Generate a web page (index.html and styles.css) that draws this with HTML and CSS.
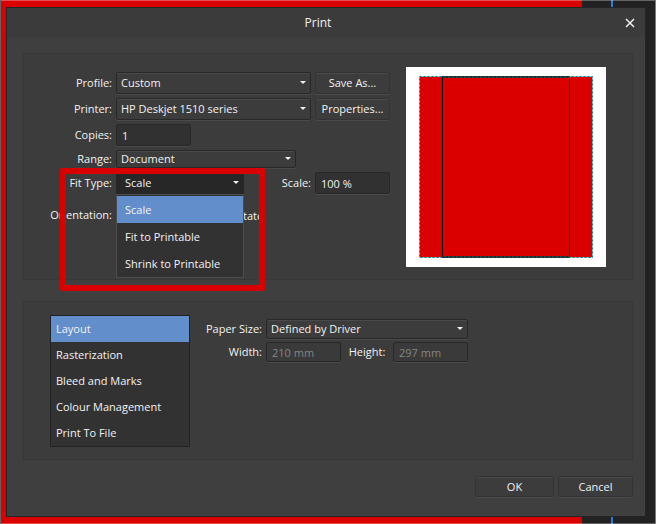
FILE: index.html
```html
<!DOCTYPE html>
<html lang="en">
<head>
    <meta charset="utf-8">
    <meta name="viewport" content="width=device-width, initial-scale=1">
    <title>Print</title>
    <link rel="stylesheet" href="styles.css">
</head>
<body>
    <div class="workspace">
        <form class="dialog">
            <div class="titlebar">
                <h1>Print</h1>
                <button type="button" class="close" aria-label="Close">
                    <svg width="10" height="10" viewBox="0 0 10 10"><path d="M1 1L9 9M9 1L1 9" stroke="#f0f0f0" stroke-width="1.500"/></svg>
                </button>
            </div>
            <div class="content">
                <div class="panel">
                    <div class="settings">
                        <label for="profile">Profile:</label>
                        <div class="select">
                            <select id="profile"><option>Custom</option></select>
                        </div>
                        <button type="button">Save As...</button>

                        <label for="printer">Printer:</label>
                        <div class="select">
                            <select id="printer"><option>HP Deskjet 1510 series</option></select>
                        </div>
                        <button type="button">Properties...</button>

                        <label for="copies">Copies:</label>
                        <input class="field first" type="text" id="copies" value="1">

                        <label for="range">Range:</label>
                        <div class="select range first">
                            <select id="range"><option>Document</option></select>
                        </div>

                        <label for="fit">Fit Type:</label>
                        <div class="fit-row">
                            <div class="select open">
                                <select id="fit"><option>Scale</option></select>
                                <ul class="menu" role="listbox" aria-label="Fit Type">
                                    <li class="selected" role="option" aria-selected="true">Scale</li>
                                    <li role="option">Fit to Printable</li>
                                    <li role="option">Shrink to Printable</li>
                                </ul>
                            </div>
                            <label for="scale">Scale:</label>
                        </div>
                        <input class="field" type="text" id="scale" value="100 %">

                        <span class="orientation">Orientation:</span>
                        <span class="rotate">tate</span>

                        <div class="highlight"></div>
                    </div>
                    <svg class="preview" width="200" height="200" viewBox="0 0 200 200">
                        <rect width="200" height="200" fill="#fff"/>
                        <rect x="13" y="10" width="174" height="180" fill="#db0000"/>
                        <rect x="13.5" y="9.500" width="173" height="181" fill="none" stroke="#8fcccc"/>
                        <rect x="13.5" y="9.500" width="173" height="181" fill="none" stroke="#1d7f80" stroke-dasharray="2 2"/>
                        <rect x="38.500" y="15.500" width="122" height="166" fill="none" stroke="#e80000" stroke-dasharray="3 1"/>
                        <path d="M36.500 9V191M163.500 9V191" stroke="#000"/>
                        <path d="M36 10H164M36 190H164" stroke="#274545" stroke-width="2"/>
                        <path d="M36 10H164M36 190H164" stroke="#101c1c" stroke-dasharray="2 2"/>
                    </svg>
                </div>

                <div class="panel">
                    <ul class="sections">
                        <li class="selected">Layout</li>
                        <li>Rasterization</li>
                        <li>Bleed and Marks</li>
                        <li>Colour Management</li>
                        <li>Print To File</li>
                    </ul>
                    <div class="paper">
                        <label for="paper">Paper Size:</label>
                        <div class="select">
                            <select id="paper"><option>Defined by Driver</option></select>
                        </div>
                        <label for="width">Width:</label>
                        <div class="size-row">
                            <input class="field" type="text" id="width" value="210 mm" disabled>
                            <label for="height">Height:</label>
                            <input class="field" type="text" id="height" value="297 mm" disabled>
                        </div>
                    </div>
                </div>

                <div class="actions">
                    <button type="submit" class="ok">OK</button>
                    <button type="button">Cancel</button>
                </div>
            </div>
        </form>
    </div>
</body>
</html>
```

FILE: styles.css
```css
* {
    box-sizing: border-box;
}
body {
    margin: 0;
    background: #222;
    color: #f2f2f2;
    font-family: "Open Sans", "Noto Sans", sans-serif;
    font-size: 11px;
    line-height: 16px;
}
.workspace {
    min-height: 100vh;
    padding: 6px 9px 6px 5px;
    border: 1px solid rgba(255,255,255,0.3);
    background: linear-gradient(to left, transparent 42px, #2c7be0 42px, #2c7be0 44px, transparent 44px, transparent 73px, #db0000 73px);
}
.dialog {
    border: 1px solid #242424;
    background: #3f3f3f;
}
.titlebar {
    display: flex;
    align-items: center;
    height: 29px;
    padding: 0 8px 0 6px;
    background: #3b3b3b;
}
.titlebar h1 {
    flex: 1;
    margin: 0;
    text-align: center;
    font-size: 12px;
    font-weight: normal;
}
.titlebar .close {
    display: flex;
    align-items: center;
    justify-content: center;
    width: 14px;
    height: 14px;
    padding: 0;
    border: none;
    background: none;
    box-shadow: none;
}
.content {
    padding: 16px 12px 19px 16px;
}
.panel {
    display: flex;
    margin-bottom: 21px;
    padding: 13px 26px 12px 0;
    border: 1px solid #373737;
    background: #3c3c3c;
}

/* form controls */
label {
    text-align: right;
    white-space: nowrap;
}
button, select, .field {
    font: inherit;
    color: inherit;
    border: 1px solid #282828;
    border-radius: 2px;
    box-shadow: 0 1px 0 #4a4a4a;
}
button {
    height: 21px;
    padding: 0;
    border-color: #333;
    background: #3c3c3c;
    box-shadow: 0 1px 0 #4a4a4a, inset 0 1px 0 #4a4a4a;
}
.select {
    position: relative;
}
.select::after {
    content: "";
    position: absolute;
    top: 50%;
    right: 5px;
    margin-top: -2px;
    border: 3px solid transparent;
    border-top-color: #f0f0f0;
    border-bottom: none;
}
select {
    display: block;
    width: 100%;
    height: 22px;
    padding: 0 4px;
    appearance: none;
    background: #3c3c3c;
    box-shadow: 0 1px 0 #4a4a4a, inset 0 1px 0 #4a4a4a;
}
.field {
    width: 75px;
    height: 22px;
    padding: 0 5px;
    background: #313131;
}
.field:disabled {
    color: #858585;
    background: #3a3a3a;
}

/* printer settings */
.settings {
    position: relative;
    flex: 1;
    display: grid;
    grid-template-columns: 88px 1fr 75px;
    align-items: center;
    align-content: start;
    gap: 4px;
    margin-right: 16px;
    padding-top: 5px;
}
.settings button {
    height: 22px;
}
.first {
    grid-column: 2 / 4;
}
.range {
    width: 180px;
}
.range select {
    height: 18px;
}
.fit-row {
    display: flex;
    align-items: center;
    justify-content: space-between;
}
.open {
    width: 128px;
}
.open select {
    padding: 0 8px;
    border-color: #272727;
    border-radius: 0;
    background: #272727;
    box-shadow: none;
}
.menu {
    position: absolute;
    z-index: 1;
    top: 100%;
    left: 0;
    right: 0;
    margin: 0;
    padding: 1px 0 0;
    border: 1px solid #4c4c4c;
    background: #323232;
    list-style: none;
}
.menu li {
    padding: 0 8px;
    line-height: 27px;
}
.selected {
    background: #628ecb;
}
.orientation {
    padding-top: 8px;
    text-align: right;
}
.rotate {
    padding: 10px 0 0 127px;
}
.highlight {
    position: absolute;
    top: 101px;
    left: 36px;
    width: 205px;
    height: 123px;
    border: 6px solid #d90000;
    border-radius: 2px;
    pointer-events: none;
}
.preview {
    display: block;
    flex: none;
}

/* page sections */
.sections {
    flex: none;
    width: 140px;
    margin: 0 0 0 26px;
    padding: 0;
    border: 1px solid #232323;
    background: #323232;
    list-style: none;
}
.sections li {
    padding: 0 5px;
    line-height: 26px;
}
.paper {
    display: grid;
    grid-template-columns: 72px 202px;
    align-items: center;
    align-content: start;
    gap: 3px 4px;
    padding-top: 4px;
}
.paper select, .paper .field {
    height: 20px;
}
.size-row {
    display: flex;
    align-items: center;
    justify-content: space-between;
}
.actions {
    display: flex;
    justify-content: flex-end;
    gap: 4px;
    margin-top: -5px;
}
.actions button {
    width: 75px;
}
.actions .ok {
    width: 79px;
}
```
